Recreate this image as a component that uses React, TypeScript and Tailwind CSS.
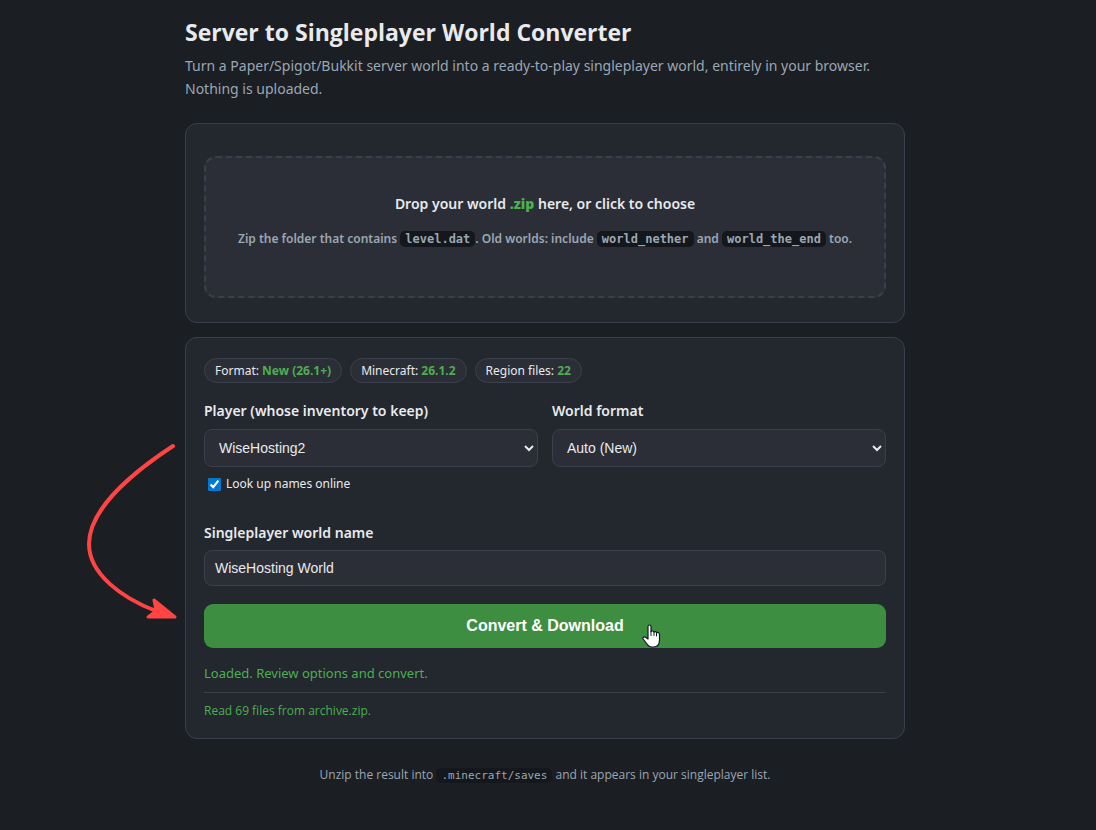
import { useState, type ReactNode } from 'react';

const PLAYERS = ['WiseHosting2'];
const FORMATS = ['Auto (New)', 'New (26.1+)', 'Legacy'];

const STATS = [
  { label: 'Format', value: 'New (26.1+)' },
  { label: 'Minecraft', value: '26.1.2' },
  { label: 'Region files', value: '22' },
];

const FIELD =
  'w-full rounded-lg border border-[#3a404b] bg-[#2b2e36] px-2.5 font-["Liberation_Sans",Arial,sans-serif] text-[14px] text-[#e8eaed]';

function Code({ children, className = 'text-[12px]' }: { children: ReactNode; className?: string }) {
  return (
    <code className={`rounded-[5px] bg-[#14171b] px-[5px] py-px font-['DejaVu_Sans_Mono',monospace] ${className}`}>
      {children}
    </code>
  );
}

function Card({ children, className = '' }: { children: ReactNode; className?: string }) {
  return (
    <section className={`relative rounded-xl border border-[#3a404b] bg-[#23272e] px-[18px] ${className}`}>
      {children}
    </section>
  );
}

function GuideArrow() {
  return (
    <svg
      className="pointer-events-none absolute top-[100px] right-full"
      width="100"
      height="190"
      viewBox="0 0 100 190"
      fill="none"
      stroke="#ff4444"
      aria-hidden="true"
    >
      <path d="M87 8C58 27 3 67 3 106C3 136 36 160 70 173" strokeWidth="4" strokeLinecap="round" />
      <path d="M68 162L89 179H62L70 173Z" fill="#ff4444" strokeWidth="3" strokeLinejoin="round" />
    </svg>
  );
}

function HandPointer() {
  return (
    <svg
      className="pointer-events-none absolute top-5 left-[438px]"
      width="19"
      height="24"
      viewBox="0 0 19 24"
      aria-hidden="true"
    >
      <path
        d="M6 2.5C6 .5 9 .5 9 2.500V7.500C10 6.500 11.500 7 12 8C13 7.200 14.300 7.700 14.500 8.700C16 8 17.500 8.800 17.500 10.500V16C17.500 20 15.500 23 11.500 23H10C7.500 23 6 21.500 5 20L1.200 15C.2 13.500 2 12.200 3.500 13.200L6 15Z"
        fill="#fff"
        stroke="#111827"
        strokeWidth="1.2"
        strokeLinejoin="round"
      />
      <path d="M9 7.500V11.500M12 8V11.500M14.500 8.700V12" stroke="#111827" strokeWidth="1" strokeLinecap="round" />
    </svg>
  );
}

export default function App() {
  const [player, setPlayer] = useState(PLAYERS[0]);
  const [format, setFormat] = useState(FORMATS[0]);
  const [lookup, setLookup] = useState(true);
  const [worldName, setWorldName] = useState('WiseHosting World');

  return (
    <div className="min-h-screen bg-[#1b1e22] pt-4 pr-1.5 pb-8 font-['Noto_Sans','Open_Sans',sans-serif] text-[#e8eaed]">
      <main className="mx-auto max-w-[720px]">
        <h1 className="font-['Open_Sans',sans-serif] text-[23px] leading-8 font-bold">
          Server to Singleplayer World Converter
        </h1>
        <p className="mt-1.5 text-[14px] leading-[23px] text-[#9aa7b4]">
          Turn a Paper/Spigot/Bukkit server world into a ready-to-play singleplayer world, entirely in your browser.
          Nothing is uploaded.
        </p>

        <Card className="mt-[23px] pt-8 pb-6">
          <label className="flex h-[142px] cursor-pointer flex-col items-center rounded-xl border-2 border-dashed border-[#3a404b] bg-[#2b2e36] pt-[34px] font-semibold">
            <span className="text-[14px] leading-6">
              Drop your world{' '}
              <b className="font-['Open_Sans',sans-serif] font-extrabold text-[#4caf50]">.zip</b> here, or click to
              choose
            </span>
            <span className="mt-3 text-[12px] leading-[22px] text-[#9aa7b4]">
              Zip the folder that contains <Code>level.dat</Code>. Old worlds: include <Code>world_nether</Code> and{' '}
              <Code>world_the_end</Code> too.
            </span>
            <input type="file" accept=".zip" className="sr-only" />
          </label>
        </Card>

        <Card className="mt-3.5 pt-5 pb-[17px]">
          <GuideArrow />

          <div className="flex flex-wrap gap-2">
            {STATS.map(stat => (
              <span
                key={stat.label}
                className="rounded-full border border-[#3a404b] bg-[#2b2e36] px-2.5 text-[12px] leading-[23px]"
              >
                {stat.label}: <b className="text-[#4caf50]">{stat.value}</b>
              </span>
            ))}
          </div>

          <div className="mt-4 grid grid-cols-2 gap-3.5">
            <div>
              <label htmlFor="player" className="block text-[14px] leading-6 font-semibold">
                Player (whose inventory to keep)
              </label>
              <select
                id="player"
                value={player}
                onChange={event => setPlayer(event.target.value)}
                className={`mt-1.5 h-[38px] ${FIELD}`}
              >
                {PLAYERS.map(name => (
                  <option key={name}>{name}</option>
                ))}
              </select>
              <label className="mt-1.5 ml-1 flex items-center gap-[5px] text-[12px] leading-[22px]">
                <input
                  type="checkbox"
                  checked={lookup}
                  onChange={event => setLookup(event.target.checked)}
                  className="size-[13px] accent-[#0078d4]"
                />
                Look up names online
              </label>
            </div>
            <div>
              <label htmlFor="format" className="block text-[14px] leading-6 font-semibold">
                World format
              </label>
              <select
                id="format"
                value={format}
                onChange={event => setFormat(event.target.value)}
                className={`mt-1.5 h-[38px] ${FIELD}`}
              >
                {FORMATS.map(name => (
                  <option key={name}>{name}</option>
                ))}
              </select>
            </div>
          </div>

          <label htmlFor="world-name" className="mt-[26px] block text-[14px] leading-6 font-semibold">
            Singleplayer world name
          </label>
          <input
            id="world-name"
            type="text"
            value={worldName}
            onChange={event => setWorldName(event.target.value)}
            className={`mt-[5px] block h-9 ${FIELD}`}
          />

          <button
            type="button"
            className="relative mt-[18px] block h-11 w-full cursor-pointer rounded-[9px] bg-[#3e8e41] font-['Liberation_Sans',Arial,sans-serif] text-[16px] font-bold text-white"
          >
            Convert &amp; Download
            <HandPointer />
          </button>

          <p className="mt-3.5 text-[13px] leading-[22px] text-[#4caf50]">Loaded. Review options and convert.</p>
          <p className="mt-2 border-t border-[#3a404b] pt-2 font-['Open_Sans',sans-serif] text-[12px] leading-5 text-[#4caf50]">
            Read 69 files from archive.zip.
          </p>
        </Card>

        <footer className="mt-[26px] text-center font-['Open_Sans',sans-serif] text-[12px] leading-5 text-[#9aa7b4]">
          Unzip the result into <Code className="text-[11px]">.minecraft/saves</Code> and it appears in your
          singleplayer list.
        </footer>
      </main>
    </div>
  );
}
